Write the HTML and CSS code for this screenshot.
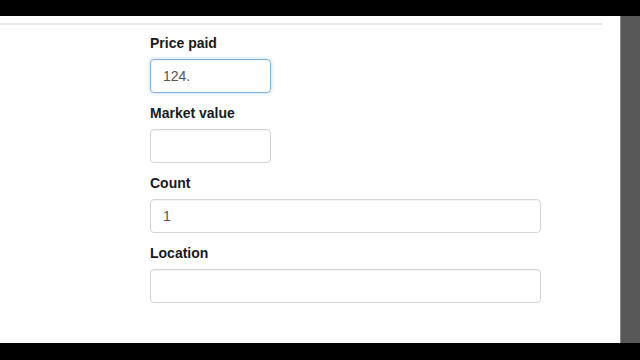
FILE: index.html
```html
<!DOCTYPE html>
<html>
<head>
<meta charset="utf-8">
<link rel="stylesheet" href="styles.css">
</head>
<body>
<div class="top-band"></div>
<div class="frame">
  <main class="page">
    <div class="rule"></div>
    <form class="form">
      <div class="group">
        <label class="label">Price paid</label>
        <input class="input input-short focused" type="text" value="124.">
      </div>
      <div class="group">
        <label class="label">Market value</label>
        <input class="input input-short" type="text" value="">
      </div>
      <div class="group">
        <label class="label">Count</label>
        <input class="input" type="text" value="1">
      </div>
      <div class="group">
        <label class="label">Location</label>
        <input class="input" type="text" value="">
      </div>
    </form>
  </main>
  <div class="side"></div>
</div>
<div class="bottom-band"></div>
</body>
</html>
```
FILE: styles.css
```css
html, body {
  margin: 0;
  padding: 0;
  width: 640px;
  height: 360px;
  overflow: hidden;
  background: #000;
  font-family: "Liberation Sans", Arial, sans-serif;
}
.top-band {
  height: 16px;
  background: #000;
}
.frame {
  display: flex;
  height: 327px;
}
.page {
  flex: 1;
  background: #fff;
  overflow: hidden;
}
.side {
  width: 19px;
  background: #585858;
  border-left: 1px solid #888;
}
.bottom-band {
  height: 17px;
  background: #000;
}
.rule {
  margin-top: 7px;
  width: 602px;
  height: 2px;
  background: #e8e8e8;
}
.form {
  margin: 8px 0 0 150px;
  width: 391px;
}
.group {
  margin-bottom: 10px;
}
.label {
  display: block;
  font-size: 14px;
  line-height: 20px;
  font-weight: bold;
  color: #1a1a1a;
  margin-bottom: 6px;
}
.input {
  display: block;
  box-sizing: border-box;
  width: 391px;
  height: 34px;
  padding: 6px 12px;
  font-family: "Liberation Sans", Arial, sans-serif;
  font-size: 14px;
  color: #555;
  background: #fff;
  border: 1px solid #d5d5d5;
  border-radius: 4px;
  box-shadow: inset 0 1px 1px rgba(0,0,0,.05);
  outline: none;
}
.input-short {
  width: 121px;
}
.focused {
  border-color: #86b3dc;
  box-shadow: inset 0 1px 1px rgba(0,0,0,.05), 0 0 4px rgba(102,175,233,.45);
}
```
